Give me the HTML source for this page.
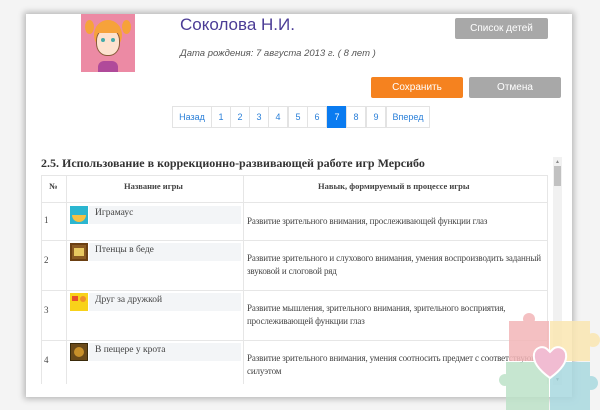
<!DOCTYPE html>
<html><head><meta charset="utf-8"><style>
*{margin:0;padding:0;box-sizing:border-box}
body{width:600px;height:410px;background:#f4f4f4;position:relative;overflow:hidden;font-family:"Liberation Sans",sans-serif}
.a{position:absolute}
#panel{left:26px;top:14px;width:546px;height:383px;background:#fff;box-shadow:0 0 6px 2px rgba(0,0,0,.25)}
.btn{position:absolute;color:#fff;font-size:10px;text-align:center;border-radius:2px}
.pg{position:absolute;top:106px;height:22px;border:1px solid #e3e3e3;color:#2a7fd8;font-size:9px;line-height:20px;text-align:center}
.ser{font-family:"Liberation Serif",serif;color:#444}
.hl{position:absolute;background:#e6e6e6;height:1px}
.vl{position:absolute;background:#e6e6e6;width:1px}
.nb{position:absolute;left:89px;width:152px;height:18px;background:#f3f5f7;font-family:"Liberation Serif",serif;font-size:9.5px;color:#444;padding:2px 0 0 6px}
.ic{position:absolute;left:70px;width:18px;height:18px}
.d{position:absolute;left:247px;font-family:"Liberation Serif",serif;font-size:9px;letter-spacing:-0.15px;color:#444;line-height:13px;white-space:nowrap}
.n{position:absolute;left:44px;font-family:"Liberation Serif",serif;font-size:9px;color:#444}
</style></head><body>
<div id="panel" class="a"></div>
<div class="a" style="left:81px;top:14px;width:54px;height:58px;background:#ec8aa4;overflow:hidden">
 <div class="a" style="left:13px;top:6px;width:28px;height:30px;border-radius:50%;background:#f6a23a"></div>
 <div class="a" style="left:4px;top:6px;width:9px;height:14px;border-radius:50%;background:#f6a23a"></div>
 <div class="a" style="left:41px;top:6px;width:9px;height:14px;border-radius:50%;background:#f6a23a"></div>
 <div class="a" style="left:15px;top:14px;width:24px;height:28px;border-radius:45%;background:#fde2cf;border:1px solid #8a5a3a"></div>
 <div class="a" style="left:15px;top:10px;width:24px;height:9px;border-radius:40% 40% 0 0;background:#f6a23a"></div>
 <div class="a" style="left:20px;top:24px;width:4px;height:4px;border-radius:50%;background:#4aa"></div>
 <div class="a" style="left:30px;top:24px;width:4px;height:4px;border-radius:50%;background:#4aa"></div>
 <div class="a" style="left:17px;top:47px;width:20px;height:12px;border-radius:6px 6px 0 0;background:#b04a9a"></div>
</div>
<div class="a" style="left:180px;top:15px;font-size:17px;color:#4b3c96">Соколова Н.И.</div>
<div class="a" style="left:180px;top:48px;font-size:9.5px;color:#555;font-style:italic">Дата рождения: 7 августа 2013 г. ( 8 лет )</div>
<div class="btn" style="left:455px;top:18px;width:93px;height:21px;line-height:21px;background:#a8a8a8">Список детей</div>
<div class="btn" style="left:371px;top:77px;width:92px;height:21px;line-height:21px;background:#f5821f">Сохранить</div>
<div class="btn" style="left:469px;top:77px;width:92px;height:21px;line-height:21px;background:#a8a8a8">Отмена</div>
<div class="pg" style="left:172px;width:40px">Назад</div>
<div class="pg" style="left:211px;width:20px">1</div>
<div class="pg" style="left:230px;width:20px">2</div>
<div class="pg" style="left:249px;width:20px">3</div>
<div class="pg" style="left:268px;width:20px">4</div>
<div class="pg" style="left:288px;width:20px">5</div>
<div class="pg" style="left:307px;width:20px">6</div>
<div class="pg" style="left:327px;width:20px;background:#0a7bf0;color:#fff;border-color:#0a7bf0">7</div>
<div class="pg" style="left:346px;width:20px">8</div>
<div class="pg" style="left:366px;width:20px">9</div>
<div class="pg" style="left:386px;width:44px">Вперед</div>
<div class="a ser" style="left:41px;top:156px;font-size:12px;font-weight:bold;color:#333">2.5. Использование в коррекционно-развивающей работе игр Мерсибо</div>
<div class="hl" style="left:41px;top:175px;width:507px"></div>
<div class="hl" style="left:41px;top:202px;width:507px"></div>
<div class="hl" style="left:41px;top:240px;width:507px"></div>
<div class="hl" style="left:41px;top:290px;width:507px"></div>
<div class="hl" style="left:41px;top:340px;width:507px"></div>
<div class="vl" style="left:41px;top:175px;height:209px"></div>
<div class="vl" style="left:66px;top:175px;height:209px"></div>
<div class="vl" style="left:243px;top:175px;height:209px"></div>
<div class="vl" style="left:547px;top:175px;height:209px"></div>
<div class="a ser" style="left:49px;top:181px;font-size:8.5px;font-weight:bold">№</div>
<div class="a ser" style="left:124px;top:181px;font-size:8.5px;font-weight:bold">Название игры</div>
<div class="a ser" style="left:318px;top:181px;font-size:8.5px;font-weight:bold">Навык, формируемый в процессе игры</div>
<div class="n" style="top:215px">1</div>
<div class="ic" style="top:206px;background:#2bb6d0"><div class="a" style="left:2px;top:9px;width:14px;height:7px;border-radius:0 0 7px 7px;background:#f5c042"></div></div>
<div class="nb" style="top:206px">Играмаус</div>
<div class="d" style="top:215px">Развитие зрительного внимания, прослеживающей функции глаз</div>
<div class="n" style="top:255px">2</div>
<div class="ic" style="top:243px;background:#8a5a22;border:2px solid #6b3f12"><div class="a" style="left:2px;top:3px;width:10px;height:8px;background:#e8c860"></div></div>
<div class="nb" style="top:243px">Птенцы в беде</div>
<div class="d" style="top:252px">Развитие зрительного и слухового внимания, умения воспроизводить заданный<br>звуковой и слоговой ряд</div>
<div class="n" style="top:305px">3</div>
<div class="ic" style="top:293px;background:#f8d21a"><div class="a" style="left:2px;top:3px;width:6px;height:5px;background:#e8502a"></div><div class="a" style="left:10px;top:3px;width:6px;height:6px;border-radius:50%;background:#f0902a"></div></div>
<div class="nb" style="top:293px">Друг за дружкой</div>
<div class="d" style="top:302px">Развитие мышления, зрительного внимания, зрительного восприятия,<br>прослеживающей функции глаз</div>
<div class="n" style="top:355px">4</div>
<div class="ic" style="top:343px;background:#6a4a1a;border:1px solid #3a2a0a"><div class="a" style="left:3px;top:3px;width:10px;height:10px;border-radius:50%;background:#c8902a"></div></div>
<div class="nb" style="top:343px">В пещере у крота</div>
<div class="d" style="top:352px">Развитие зрительного внимания, умения соотносить предмет с соответствующим<br>силуэтом</div>
<div class="a" style="left:553px;top:157px;width:9px;height:228px;background:#f1f1f1"></div>
<div class="a" style="left:554px;top:166px;width:7px;height:20px;background:#c1c1c1"></div>
<div class="a" style="left:555px;top:159px;font-size:5px;color:#888">▲</div>
<div class="a" style="left:555px;top:377px;font-size:5px;color:#555">▼</div>
<div style="position:absolute;left:0;top:0;opacity:.85">
<div class="a" style="left:509px;top:321px;width:40px;height:40px;background:#f3b6b8"></div>
<div class="a" style="left:523px;top:313px;width:12px;height:12px;border-radius:50%;background:#f3b6b8"></div>
<div class="a" style="left:550px;top:321px;width:40px;height:40px;background:#fbe7b2"></div>
<div class="a" style="left:586px;top:333px;width:14px;height:14px;border-radius:50%;background:#fbe7b2"></div>
<div class="a" style="left:506px;top:362px;width:43px;height:48px;background:#bde2c8"></div>
<div class="a" style="left:499px;top:374px;width:12px;height:12px;border-radius:50%;background:#bde2c8"></div>
<div class="a" style="left:550px;top:362px;width:40px;height:48px;background:#a9d9e0"></div>
<div class="a" style="left:584px;top:376px;width:14px;height:14px;border-radius:50%;background:#a9d9e0"></div>
</div>
<svg class="a" style="left:531px;top:344px" width="38" height="36" viewBox="0 0 38 36"><path d="M19 34 C5 24 2 16 3 10 C4 4 11 1 16 5 L19 8 L22 5 C27 1 34 4 35 10 C36 16 33 24 19 34Z" fill="#f1bcd2" stroke="#fff" stroke-width="2"/></svg>
</body></html>
